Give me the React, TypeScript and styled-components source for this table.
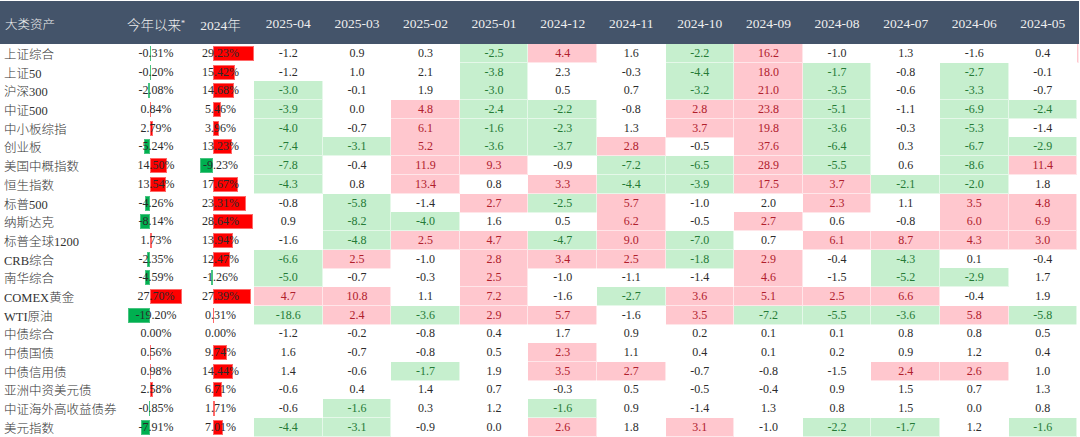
import styled, { createGlobalStyle } from "styled-components";

type Tone = "p" | "g" | "";

interface AssetRow {
  name: string;
  ytd: number;
  y2024: number;
  months: string[];
  edge?: Tone;
}

const GlobalStyle = createGlobalStyle`
  html, body {
    margin: 0;
    padding: 0;
    background: #ffffff;
  }
  body {
    width: 1080px;
    height: 437px;
    overflow: hidden;
  }
`;

const MONTHS = [
  "2025-04",
  "2025-03",
  "2025-02",
  "2025-01",
  "2024-12",
  "2024-11",
  "2024-10",
  "2024-09",
  "2024-08",
  "2024-07",
  "2024-06",
  "2024-05",
];

// "p" suffix = light red fill, "g" suffix = light green fill
const ROWS: AssetRow[] = [
  { name: "上证综合", ytd: -0.31, y2024: 29.23, edge: "p", months: ["-1.2", "0.9", "0.3", "-2.5g", "4.4p", "1.6", "-2.2g", "16.2p", "-1.0", "1.3", "-1.6", "0.4"] },
  { name: "上证50", ytd: -0.2, y2024: 15.42, months: ["-1.2", "1.0", "2.1", "-3.8g", "2.3", "-0.3", "-4.4g", "18.0p", "-1.7g", "-0.8", "-2.7g", "-0.1"] },
  { name: "沪深300", ytd: -2.08, y2024: 14.68, months: ["-3.0g", "-0.1", "1.9", "-3.0g", "0.5", "0.7", "-3.2g", "21.0p", "-3.5g", "-0.6", "-3.3g", "-0.7"] },
  { name: "中证500", ytd: 0.84, y2024: 5.46, months: ["-3.9g", "0.0", "4.8p", "-2.4g", "-2.2g", "-0.8", "2.8p", "23.8p", "-5.1g", "-1.1", "-6.9g", "-2.4g"] },
  { name: "中小板综指", ytd: 2.79, y2024: 3.96, months: ["-4.0g", "-0.7", "6.1p", "-1.6g", "-2.3g", "1.3", "3.7p", "19.8p", "-3.6g", "-0.3", "-5.3g", "-1.4"] },
  { name: "创业板", ytd: -5.24, y2024: 13.23, months: ["-7.4g", "-3.1g", "5.2p", "-3.6g", "-3.7g", "2.8p", "-0.5", "37.6p", "-6.4g", "0.3", "-6.7g", "-2.9g"] },
  { name: "美国中概指数", ytd: 14.5, y2024: -9.23, months: ["-7.8g", "-0.4", "11.9p", "9.3p", "-0.9", "-7.2g", "-6.5g", "28.9p", "-5.5g", "0.6", "-8.6g", "11.4p"] },
  { name: "恒生指数", ytd: 13.54, y2024: 17.67, months: ["-4.3g", "0.8", "13.4p", "0.8", "3.3p", "-4.4g", "-3.9g", "17.5p", "3.7p", "-2.1g", "-2.0g", "1.8"] },
  { name: "标普500", ytd: -4.26, y2024: 23.31, months: ["-0.8", "-5.8g", "-1.4", "2.7p", "-2.5g", "5.7p", "-1.0", "2.0", "2.3p", "1.1", "3.5p", "4.8p"] },
  { name: "纳斯达克", ytd: -8.14, y2024: 28.64, months: ["0.9", "-8.2g", "-4.0g", "1.6", "0.5", "6.2p", "-0.5", "2.7p", "0.6", "-0.8", "6.0p", "6.9p"] },
  { name: "标普全球1200", ytd: 1.73, y2024: 13.94, months: ["-1.6", "-4.8g", "2.5p", "4.7p", "-4.7g", "9.0p", "-7.0g", "0.7", "6.1p", "8.7p", "4.3p", "3.0p"] },
  { name: "CRB综合", ytd: -2.35, y2024: 12.47, months: ["-6.6g", "2.5p", "-1.0", "2.8p", "3.4p", "2.5p", "-1.8g", "2.9p", "-0.4", "-4.3g", "0.1", "-0.4"] },
  { name: "南华综合", ytd: -4.59, y2024: -1.26, months: ["-5.0g", "-0.7", "-0.3", "2.5p", "-1.0", "-1.1", "-1.4", "4.6p", "-1.5", "-5.2g", "-2.9g", "1.7"] },
  { name: "COMEX黄金", ytd: 27.7, y2024: 27.39, months: ["4.7p", "10.8p", "1.1", "7.2p", "-1.6", "-2.7g", "3.6p", "5.1p", "2.5p", "6.6p", "-0.4", "1.9"] },
  { name: "WTI原油", ytd: -19.2, y2024: 0.31, months: ["-18.6g", "2.4p", "-3.6g", "2.9p", "5.7p", "-1.6", "3.5p", "-7.2g", "-5.5g", "-3.6g", "5.8p", "-5.8g"] },
  { name: "中债综合", ytd: 0, y2024: 0, months: ["-1.2", "-0.2", "-0.8", "0.4", "1.7", "0.9", "0.2", "0.1", "0.1", "0.8", "0.8", "0.5"] },
  { name: "中债国债", ytd: 0.56, y2024: 9.74, months: ["1.6", "-0.7", "-0.8", "0.5", "2.3p", "1.1", "0.4", "0.1", "0.2", "0.9", "1.2", "0.4"] },
  { name: "中债信用债", ytd: 0.98, y2024: 14.44, months: ["1.4", "-0.6", "-1.7g", "1.9", "3.5p", "2.7p", "-0.7", "-0.8", "-1.5", "2.4p", "2.6p", "1.0"] },
  { name: "亚洲中资美元债", ytd: 2.58, y2024: 6.71, months: ["-0.6", "0.4", "1.4", "0.7", "-0.3", "0.5", "-0.5", "-0.4", "0.9", "1.5", "0.7", "1.3"] },
  { name: "中证海外高收益债券", ytd: -0.85, y2024: 1.71, months: ["-0.6", "-1.6g", "0.3", "1.2", "-1.6g", "0.9", "-1.4", "1.3", "0.8", "1.5", "0.0", "0.8"] },
  { name: "美元指数", ytd: -7.91, y2024: 7.01, months: ["-4.4g", "-3.1g", "-0.9", "0.0", "2.6p", "1.8", "3.1p", "-1.0", "-2.2g", "-1.7g", "1.2", "-1.6g"] },
];

const COLS = "125px 62px 67px repeat(12, 68.6px) 2px";

const Table = styled.div`
  width: 1079px;
  padding-top: 1px;
  font-family: "Liberation Serif", "Noto Sans CJK SC", serif;
`;

const HeaderRow = styled.div`
  display: grid;
  grid-template-columns: ${COLS};
  height: 43px;
  background: #44546a;
  color: #eeeeee;
  font-size: 13.5px;
  font-weight: 300;
`;

const HeadCell = styled.div<{ $left?: boolean }>`
  display: flex;
  align-items: center;
  justify-content: ${(p) => (p.$left ? "flex-start" : "center")};
  padding-left: ${(p) => (p.$left ? "5px" : "0")};
  padding-top: 2px;
  white-space: nowrap;
  font-size: ${(p) => (p.$left ? "12.5px" : "inherit")};
`;

const Star = styled.sup`
  font-size: 8px;
  vertical-align: 5px;
`;

const Row = styled.div`
  display: grid;
  grid-template-columns: ${COLS};
  height: 18.7px;
  color: #2b2b2b;
`;

const Label = styled.div`
  display: flex;
  align-items: center;
  padding-left: 4px;
  font-size: 12.5px;
  font-weight: 300;
  color: #333333;
  white-space: nowrap;
`;

const BarCell = styled.div`
  position: relative;
  display: flex;
  align-items: center;
  justify-content: center;
  font-size: 12px;
`;

const Bar = styled.span<{ $up: boolean }>`
  position: absolute;
  top: 2px;
  bottom: 2px;
  background: ${(p) => (p.$up ? "#ff0000" : "#00b050")};
  box-shadow: inset 0 0 0 1px
    ${(p) => (p.$up ? "rgba(255, 150, 150, 0.7)" : "rgba(120, 210, 160, 0.6)")};
`;

const BarText = styled.span`
  position: relative;
`;

const Cell = styled.div<{ $tone: Tone }>`
  display: flex;
  align-items: center;
  justify-content: center;
  font-size: 12px;
  background: ${(p) =>
    p.$tone === "p" ? "#ffc7ce" : p.$tone === "g" ? "#c6efce" : "transparent"};
  color: ${(p) =>
    p.$tone === "p" ? "#b0202c" : p.$tone === "g" ? "#257a36" : "inherit"};
  box-shadow: inset -1px -1px 0 rgba(255, 255, 255, 0.55);
`;

const DataBar = ({
  value,
  axis,
  scale,
}: {
  value: number;
  axis: number;
  scale: number;
}) => {
  const width = Math.abs(value) * scale;
  const up = value >= 0;
  return (
    <BarCell>
      {value !== 0 && (
        <Bar
          $up={up}
          style={{ left: up ? axis : axis - width, width: Math.max(width, 1) }}
        />
      )}
      <BarText>{value.toFixed(2)}%</BarText>
    </BarCell>
  );
};

const parseCell = (raw: string): [string, Tone] => {
  const last = raw.slice(-1);
  if (last === "p" || last === "g") return [raw.slice(0, -1), last];
  return [raw, ""];
};

const App = () => {
  return (
    <>
      <GlobalStyle />
      <Table>
        <HeaderRow>
          <HeadCell $left>大类资产</HeadCell>
          <HeadCell>
            今年以来<Star>*</Star>
          </HeadCell>
          <HeadCell>2024年</HeadCell>
          {MONTHS.map((m) => (
            <HeadCell key={m}>{m}</HeadCell>
          ))}
          <HeadCell />
        </HeaderRow>
        {ROWS.map((row) => (
          <Row key={row.name}>
            <Label>{row.name}</Label>
            <DataBar value={row.ytd} axis={25} scale={1.17} />
            <DataBar value={row.y2024} axis={26} scale={1.4} />
            {row.months.map((raw, i) => {
              const [text, tone] = parseCell(raw);
              return (
                <Cell key={MONTHS[i]} $tone={tone}>
                  {text}
                </Cell>
              );
            })}
            <Cell $tone={row.edge ?? ""} />
          </Row>
        ))}
      </Table>
    </>
  );
};

export default App;
